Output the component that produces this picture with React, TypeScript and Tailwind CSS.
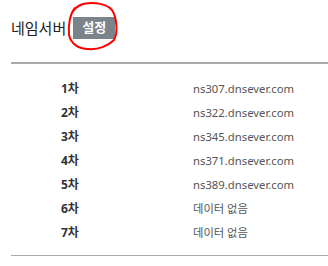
const NAMESERVERS: { label: string; value: string | null }[] = [
  { label: '1차', value: 'ns307.dnsever.com' },
  { label: '2차', value: 'ns322.dnsever.com' },
  { label: '3차', value: 'ns345.dnsever.com' },
  { label: '4차', value: 'ns371.dnsever.com' },
  { label: '5차', value: 'ns389.dnsever.com' },
  { label: '6차', value: null },
  { label: '7차', value: null },
]

function Scribble() {
  return (
    <svg
      className="pointer-events-none absolute left-[62px] top-0"
      width="60"
      height="55"
      viewBox="0 0 60 55"
      fill="none"
    >
      <path
        d="M13 8 C8 14, 6 25, 7 35 C9 44, 17 49, 26 49 C36 50, 46 46, 52 40 C56 33, 55 18, 50 10 C44 3, 31 2, 21 4 C15 6, 11 10, 9 15"
        stroke="#ff0000"
        strokeWidth="2"
        strokeLinecap="round"
      />
    </svg>
  )
}

export default function App() {
  return (
    <div
      className="relative h-[266px] w-[328px] overflow-hidden bg-white pl-[11px]"
      style={{ fontFamily: '"Noto Sans", "Noto Sans CJK KR", sans-serif' }}
    >
      <div className="flex h-[62px] items-start pt-[17px]">
        <h2 className="mt-[3px] text-[15px] leading-[16px] text-[#222]">네임서버</h2>
        <button className="ml-[7px] flex h-[22px] w-[42px] items-center justify-center bg-[#7b838b] text-[13px] font-bold text-white">
          설정
        </button>
      </div>
      <div className="h-[2px] bg-[#aaaaaa]" />

      <div className="flex flex-col pt-[13px] pb-[10px]">
        {NAMESERVERS.map((ns) => (
          <div key={ns.label} className="flex h-[24px] items-center">
            <span className="w-[182px] pl-[50px] text-[12px] font-bold text-[#333]">{ns.label}</span>
            <span className="text-[11.3px] text-[#555]">{ns.value ?? '데이터 없음'}</span>
          </div>
        ))}
      </div>
      <div className="h-px bg-[#aaaaaa]" />

      <Scribble />
    </div>
  )
}
